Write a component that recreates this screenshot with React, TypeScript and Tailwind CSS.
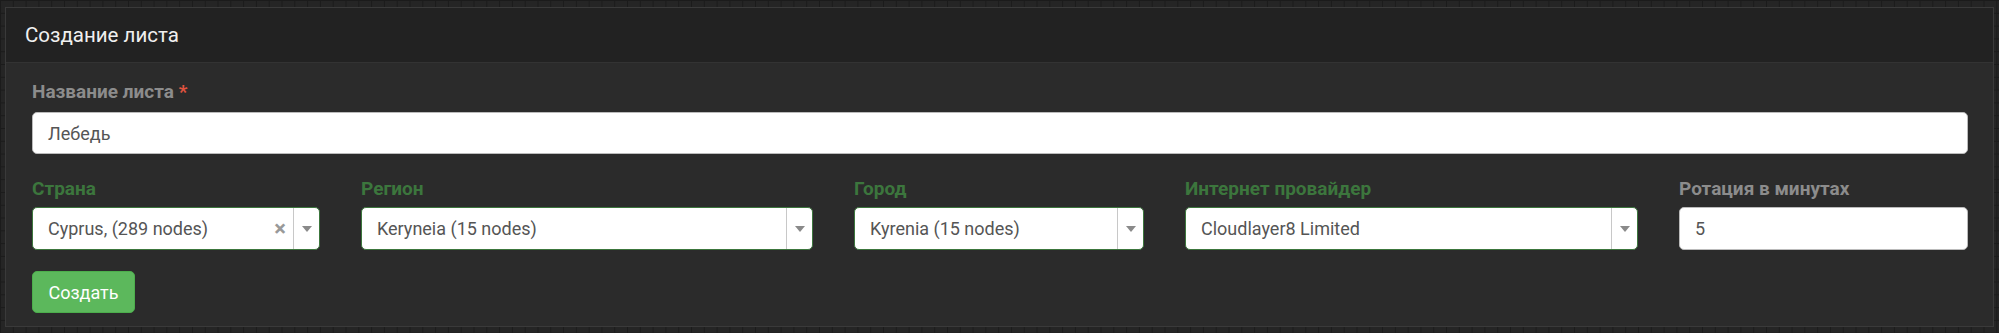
import React from "react";

const font = { fontFamily: "Roboto, 'Noto Sans', sans-serif" };

type SelectProps = {
  value: string;
  clearable?: boolean;
};

const Caret = () => (
  <svg width="10" height="6" viewBox="0 0 10 6" className="block">
    <path d="M0 0h10L5 6z" fill="#8a8a8a" />
  </svg>
);

const Select = ({ value, clearable }: SelectProps) => (
  <div className="flex h-[43px] items-stretch rounded-[5px] border border-[#3c763d] bg-white">
    <div className="flex flex-1 items-center pl-[15px] text-[18px] text-[#555]">
      {value}
    </div>
    {clearable && (
      <div className="flex w-[26px] items-center justify-center text-[22px] font-bold leading-none text-[#999]">
        ×
      </div>
    )}
    <div className="w-px bg-[#c8c8c8]" />
    <div className="flex w-[25px] items-center justify-center">
      <Caret />
    </div>
  </div>
);

const Field = ({
  label,
  green = true,
  children,
}: {
  label: string;
  green?: boolean;
  children: React.ReactNode;
}) => (
  <div className="flex flex-col">
    <label
      className={`mb-[6px] text-[19px] font-bold leading-[25px] ${
        green ? "text-[#3c763d]" : "text-[#8c8c8c]"
      }`}
    >
      {label}
    </label>
    {children}
  </div>
);

export default function App() {
  return (
    <div
      className="h-[333px] w-full overflow-hidden bg-[#252525] bg-[linear-gradient(to_right,#1b1b1b_1px,transparent_1px),linear-gradient(to_bottom,#1b1b1b_1px,transparent_1px)] bg-[size:12.8px_12.8px] pt-[7px]"
      style={font}
    >
      <div className="mx-[5px] border border-[#3a3a3a] bg-[#2b2b2b]">
        <div className="flex h-[55px] items-center border-b border-[#333] bg-[#222] pl-[19px] text-[20.5px] text-[#f0f0f0]">
          Создание листа
        </div>
        <div className="pb-[13px] pl-[26px] pr-[25px] pt-[16px]">
          <label className="mb-[8px] block text-[19px] font-bold leading-[25px] text-[#8c8c8c]">
            Название листа <span className="text-[#e0533f]">*</span>
          </label>
          <div className="flex h-[42px] items-center rounded-[5px] border border-[#bbb] bg-white pl-[15px] text-[18px] text-[#555]">
            Лебедь
          </div>

          <div className="mt-[22px] grid grid-cols-[288px_452px_290px_453px_1fr] gap-x-[41px]">
            <Field label="Страна">
              <Select value="Cyprus, (289 nodes)" clearable />
            </Field>
            <Field label="Регион">
              <Select value="Keryneia (15 nodes)" />
            </Field>
            <Field label="Город">
              <Select value="Kyrenia (15 nodes)" />
            </Field>
            <Field label="Интернет провайдер">
              <Select value="Cloudlayer8 Limited" />
            </Field>
            <Field label="Ротация в минутах" green={false}>
              <div className="flex h-[43px] items-center rounded-[5px] border border-[#bbb] bg-white pl-[15px] text-[18px] text-[#555]">
                5
              </div>
            </Field>
          </div>

          <button className="mt-[21px] flex h-[42px] w-[103px] items-center justify-center rounded-[5px] border border-[#4cae4c] bg-[#5cb85c] text-[18px] text-white">
            Создать
          </button>
        </div>
      </div>
    </div>
  );
}
